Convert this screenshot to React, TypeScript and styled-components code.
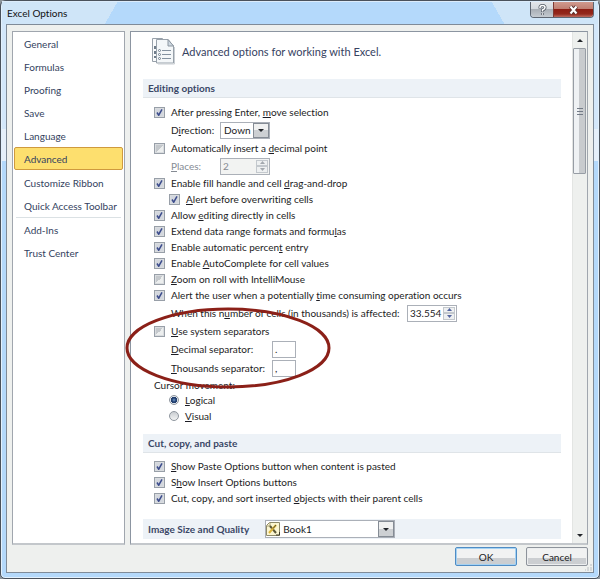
import React, { ReactNode } from 'react';
import styled, { createGlobalStyle, css } from 'styled-components';

const GlobalStyle = createGlobalStyle`
  * { box-sizing: border-box; }
  html, body { margin: 0; }
  body, button, input, select {
    font-family: Lato, "Open Sans", sans-serif;
    font-size: 10px;
    line-height: 14px;
    color: #1c1c24;
    font-variant-ligatures: none;
  }
  body { background: #8d959c; }
`;

const Window = styled.div`
  display: flex;
  flex-direction: column;
  min-height: 100vh;
  padding: 0 5px 5px;
  border: 1px solid #4a525c;
  border-radius: 6px 6px 5px 5px;
  background: linear-gradient(#d3e7fa 0 128px, #e6f0fa 128px 160px, #b4d9fb 160px);
  box-shadow: inset 0 0 0 1px #e3f1fd;
`;

const TitleBar = styled.header`
  display: flex;
  justify-content: space-between;
  align-items: flex-start;
  height: 23px;
  margin: 0 -4px;
  padding-left: 5px;
  border-top: 1px solid #dcecfb;
  background:
    linear-gradient(120deg, #cfe5f8 0 100px, transparent 100px),
    linear-gradient(240deg, #cfe5f8 0 92px, transparent 92px),
    #b4d9fb;
`;

const Title = styled.h1`
  margin: 4px 0 0;
  font-size: 10px;
  line-height: 14px;
  font-weight: 400;
  color: #111;
`;

const Caption = styled.div`
  display: flex;
  margin-right: 4px;
  border: 1px solid #5d6672;
  border-top: 0;
  border-radius: 0 0 4px 4px;
  overflow: hidden;
`;

const CaptionButton = styled.button<{ $close?: boolean }>`
  display: grid;
  place-items: center;
  width: ${p => (p.$close ? 40 : 22)}px;
  height: 15px;
  padding: 0;
  border: 0;
  border-left: ${p => (p.$close ? '1px solid #7d3a34' : '0')};
  background: ${p =>
    p.$close
      ? 'linear-gradient(#d09a8e, #c07f72 45%, #8c1c12 45%, #94281c 80%, #bd6c60)'
      : 'linear-gradient(#e3e6ea, #d3d8de 50%, #a9afb6 50%, #c4cad0)'};
`;

const Client = styled.div`
  display: flex;
  flex-direction: column;
  flex: 1;
  border: 1px solid #7f8b98;
  background: #eef0ee;
`;

const Panels = styled.div`
  display: flex;
  flex: 1;
  gap: 5px;
  padding: 6px 5px 0;
`;

const Nav = styled.nav`
  flex: 0 0 113px;
  min-width: 0;
  border: 1px solid #a0a6ae;
  border-bottom: 2px solid #c3c7cb;
  background: #fff;
`;

const NavLink = styled.a<{ $active?: boolean }>`
  display: block;
  height: 23px;
  padding: 4px 0 3px 9px;
  border: 1px solid transparent;
  margin: 0 1px;
  color: #343f60;
  text-decoration: none;
  white-space: nowrap;
  ${p =>
    p.$active &&
    css`
      margin-bottom: 1px;
      border-color: #cf9a3e;
      border-radius: 2px;
      background: #fddf6e;
    `}
`;

const NavRule = styled.hr`
  height: 1px;
  margin: 0 3px;
  border: 0;
  background: #dbe1e4;
`;

const Main = styled.main`
  display: flex;
  flex: 1;
  min-width: 0;
  border: 1px solid #8c95a1;
  border-right-color: #a0a6ae;
  border-bottom: 2px solid #c3c7cb;
  background: #fff;
`;

const Content = styled.div`
  flex: 1;
  min-width: 0;
  padding: 5px 11px 4px 12px;
`;

const Heading = styled.div`
  display: flex;
  align-items: flex-start;
  gap: 7px;
  height: 42px;
  padding-left: 8px;

  h2 {
    margin: 7px 0 0;
    font-size: 11px;
    line-height: 16px;
    font-weight: 400;
    color: #36425f;
    white-space: nowrap;
  }
`;

const SectionBar = styled.div<{ $tall?: boolean }>`
  display: flex;
  align-items: center;
  gap: 16px;
  height: ${p => (p.$tall ? 20 : 19)}px;
  margin-top: ${p => (p.$tall ? 3 : 0)}px;
  padding-left: 5px;
  border-bottom: ${p => (p.$tall ? '0' : '1px solid #dfe4e8')};
  background: #edf2f7;

  h3 {
    margin: 0;
    font-size: 10px;
    line-height: 14px;
    color: #3a4766;
  }

  label { color: inherit; }
`;

const Rows = styled.div`
  padding: 5px 0 10px 11px;
`;

const Row = styled.div<{ $h?: number; $indent?: number }>`
  display: flex;
  align-items: center;
  height: ${p => p.$h ?? 16}px;
  padding-left: ${p => p.$indent ?? 0}px;
  white-space: nowrap;
`;

const CheckLabel = styled.label`
  display: flex;
  align-items: center;
  gap: 6px;
`;

const Check = styled.input`
  appearance: none;
  width: 11px;
  height: 11px;
  margin: 0;
  border: 1px solid #989fa8;
  background: linear-gradient(135deg, #c4c8cc 0 50%, #eceeee 50%);
  box-shadow: inset 0 0 0 1px #d9dcdf;

  &:checked {
    background: #d3d7de
      url("data:image/svg+xml,%3Csvg xmlns='http://www.w3.org/2000/svg' viewBox='0 0 9 9'%3E%3Cpath d='M2 4.5 3.7 7.2 7 1.3' fill='none' stroke='%233c4c8c' stroke-width='1.5'/%3E%3C/svg%3E");
  }
`;

const Radio = styled.input`
  appearance: none;
  width: 10px;
  height: 10px;
  margin: 0;
  border: 1px solid #8f969e;
  border-radius: 50%;
  background: linear-gradient(#c9cdd1, #f2f3f3);

  &:checked {
    background: radial-gradient(circle at 50% 50%, #6f9bd0 0, #23406f 2px, #23406f 3px, #e3e7ec 3px);
  }
`;

const FieldLabel = styled.label<{ $w?: number; $muted?: boolean }>`
  width: ${p => (p.$w ? `${p.$w}px` : 'auto')};
  color: ${p => (p.$muted ? '#858b93' : 'inherit')};
`;

const SelectBox = styled.span<{ $w: number; $h: number }>`
  display: flex;
  align-items: center;
  width: ${p => p.$w}px;
  height: ${p => p.$h}px;
  border: 1px solid #abb0b8;
  background: #fff;
`;

const Select = styled.select`
  appearance: none;
  flex: 1;
  min-width: 0;
  height: 14px;
  padding: 0 0 0 3px;
  border: 0;
  background: transparent;
`;

const DropArrow = styled.span`
  display: grid;
  place-items: center;
  align-self: stretch;
  width: 16px;
  border: 1px solid #858c95;
  background: linear-gradient(#f0f1f1 50%, #cdd0d3 50%);
`;

const Spinner = styled.span<{ $disabled?: boolean }>`
  display: flex;
  width: 50px;
  height: 17px;
  padding: 1px;
  border: 1px solid #abb0b8;
  background: ${p => (p.$disabled ? '#f2f3f2' : '#fff')};

  input {
    flex: 1;
    min-width: 0;
    padding: 0 0 0 1px;
    border: 0;
    background: transparent;
    color: ${p => (p.$disabled ? '#858b93' : '#1c1c24')};
  }
`;

const SpinButtons = styled.span`
  display: grid;
  grid-template-rows: 1fr 1fr;
  width: 12px;

  button {
    display: grid;
    place-items: center;
    min-height: 0;
    padding: 0;
    border: 1px solid #c3c8cd;
    background: #eef0f1;
  }
`;

const CharInput = styled.input`
  width: 24px;
  height: 17px;
  padding: 0 2px;
  border: 1px solid #abb0b8;
  background: #fff;
`;

const Separators = styled.div`
  position: relative;
`;

const Ring = styled.svg`
  position: absolute;
  left: -29px;
  top: -16px;
  width: 206px;
  height: 82px;
  pointer-events: none;
`;

const ScrollBar = styled.div`
  display: flex;
  flex-direction: column;
  flex: 0 0 15px;
  border-left: 1px solid #e3e5e3;
  background: #eef0ee;
`;

const ScrollButton = styled.button`
  display: grid;
  place-items: center;
  height: 16px;
  padding: 0;
  border: 0;
  background: transparent;
`;

const Thumb = styled.div`
  display: grid;
  place-items: center;
  width: 13px;
  height: 126px;
  border: 1px solid #979da5;
  border-radius: 1px;
  background: linear-gradient(90deg, #eff2f4 45%, #c8cbce 45%);
`;

const Track = styled.div`
  flex: 1;
`;

const Footer = styled.footer`
  position: relative;
  display: flex;
  justify-content: flex-end;
  align-items: flex-start;
  gap: 9px;
  height: 27px;
  padding: 2px 5px 0 0;
`;

const PushButton = styled.button<{ $primary?: boolean }>`
  width: 62px;
  height: 19px;
  padding: 0;
  border: 1px solid ${p => (p.$primary ? '#4f8cc4' : '#8d939b')};
  border-radius: 2px;
  background: linear-gradient(#f1f2f2 60%, #cbced1 60%);
  box-shadow: inset 0 0 0 1px ${p => (p.$primary ? '#a5d2f2' : '#eceeef')};
`;

const Grip = styled.svg`
  position: absolute;
  right: 1px;
  bottom: 1px;
  width: 7px;
  height: 7px;
`;

const Arrow = ({ up, w = 6, color = '#22252a' }: { up?: boolean; w?: number; color?: string }) => (
  <svg width={w} height="3" viewBox="0 0 6 3" preserveAspectRatio="none" aria-hidden="true">
    <path d={up ? 'M0 3h6L3 0z' : 'M0 0h6L3 3z'} fill={color} />
  </svg>
);

const PagesIcon = () => (
  <svg width="24" height="28" viewBox="0 0 24 28" aria-hidden="true">
    <path d="M1.500 1.500h10l4 4v19h-14z" fill="#fafbfc" stroke="#98a1aa" />
    <path d="M4 9v3M4 14v3M4 19v2" stroke="#6f7c8a" strokeWidth="2" />
    <path d="M5.500 2.500H17l5.500 6.500v17H5.500z" fill="#f4f7f9" stroke="#98a1aa" />
    <path d="M17 2.500V9h5.500z" fill="#cfd9e2" stroke="#8d97a1" />
    <path d="M11 13.500h9M11 17.500h9M11 21.500h9" stroke="#8492a0" />
    <g fill="#fff" stroke="#6f7e8d">
      <circle cx="8.500" cy="13.500" r="1" />
      <circle cx="8.500" cy="17.500" r="1" />
      <circle cx="8.500" cy="21.500" r="1" />
    </g>
    <path d="M7 27h16.500V10" fill="none" stroke="#c9ced3" />
  </svg>
);

const BookIcon = () => (
  <svg width="14" height="14" viewBox="0 0 14 14" aria-hidden="true">
    <path d="M3.500.5h10v13H.5v-10z" fill="#fbf6d2" stroke="#8d8969" />
    <path d="M1 4h3V1" fill="none" stroke="#a39d72" />
    <path d="M4 4l6 7" stroke="#5b5738" strokeWidth="2" />
    <path d="M10 3l-7 8" stroke="#dcb43a" strokeWidth="2" />
    <path d="M10 3l-3 3.500" stroke="#5b5738" strokeWidth="1" />
    <path d="M10 13h3.500v-3" fill="none" stroke="#3d3a28" />
  </svg>
);

interface CheckRowProps {
  children: ReactNode;
  checked?: boolean;
  h?: number;
  indent?: number;
}

const CheckRow = ({ children, checked, h, indent }: CheckRowProps) => (
  <Row $h={h} $indent={indent}>
    <CheckLabel>
      <Check type="checkbox" defaultChecked={checked} />
      <span>{children}</span>
    </CheckLabel>
  </Row>
);

const SpinBox = ({ id, value, disabled }: { id: string; value: string; disabled?: boolean }) => (
  <Spinner $disabled={disabled}>
    <input id={id} defaultValue={value} disabled={disabled} />
    <SpinButtons>
      <button type="button" aria-label="Increase" disabled={disabled}>
        <Arrow up w={5} color={disabled ? '#a3a8ae' : '#5566a0'} />
      </button>
      <button type="button" aria-label="Decrease" disabled={disabled}>
        <Arrow w={5} color={disabled ? '#a3a8ae' : '#5566a0'} />
      </button>
    </SpinButtons>
  </Spinner>
);

const navTop = ['General', 'Formulas', 'Proofing', 'Save', 'Language', 'Advanced', 'Customize Ribbon', 'Quick Access Toolbar'];
const navBottom = ['Add-Ins', 'Trust Center'];

export default function App() {
  return (
    <>
      <GlobalStyle />
      <Window>
        <TitleBar>
          <Title>Excel Options</Title>
          <Caption>
            <CaptionButton type="button" aria-label="Help">
              <svg width="9" height="12" viewBox="0 0 9 12" fill="none" aria-hidden="true">
                <path d="M2 4.500V3.500Q2 1.500 4.500 1.500T7 3.500Q7 5 4.500 6v2M4.500 9v2" stroke="#535b66" strokeWidth="3" />
                <path d="M2 4V3.500Q2 1.500 4.500 1.500T7 3.500Q7 5 4.500 6v1.500M4.500 9.200v1.500" stroke="#fff" strokeWidth="1.500" />
              </svg>
            </CaptionButton>
            <CaptionButton type="button" $close aria-label="Close">
              <svg width="11" height="10" viewBox="0 0 11 10" aria-hidden="true">
                <path d="M2.500 1.500l6 7M8.500 1.500l-6 7" stroke="#5a3532" strokeWidth="4" />
                <path d="M2.500 1.500l6 7M8.500 1.500l-6 7" stroke="#fff" strokeWidth="2" />
              </svg>
            </CaptionButton>
          </Caption>
        </TitleBar>

        <Client>
          <Panels>
            <Nav>
              {navTop.map(name => (
                <NavLink key={name} href="#" $active={name === 'Advanced'}>{name}</NavLink>
              ))}
              <NavRule />
              {navBottom.map(name => (
                <NavLink key={name} href="#">{name}</NavLink>
              ))}
            </Nav>

            <Main>
              <Content>
                <Heading>
                  <PagesIcon />
                  <h2>Advanced options for working with Excel.</h2>
                </Heading>

                <SectionBar><h3>Editing options</h3></SectionBar>
                <Rows>
                  <CheckRow checked h={18}>After pressing Enter, <u>m</u>ove selection</CheckRow>
                  <Row $h={18} $indent={17}>
                    <FieldLabel htmlFor="direction" $w={49}>D<u>i</u>rection:</FieldLabel>
                    <SelectBox $w={50} $h={17}>
                      <Select id="direction" defaultValue="Down">
                        <option>Down</option>
                        <option>Right</option>
                        <option>Up</option>
                        <option>Left</option>
                      </Select>
                      <DropArrow><Arrow /></DropArrow>
                    </SelectBox>
                  </Row>
                  <CheckRow h={18}>Automatically insert a <u>d</u>ecimal point</CheckRow>
                  <Row $h={18} $indent={17}>
                    <FieldLabel htmlFor="places" $w={49} $muted><u>P</u>laces:</FieldLabel>
                    <SpinBox id="places" value="2" disabled />
                  </Row>
                  <CheckRow checked>Enable fill handle and cell <u>d</u>rag-and-drop</CheckRow>
                  <CheckRow checked indent={15}><u>A</u>lert before overwriting cells</CheckRow>
                  <CheckRow checked>Allow <u>e</u>diting directly in cells</CheckRow>
                  <CheckRow checked>Extend data range formats and formu<u>l</u>as</CheckRow>
                  <CheckRow checked>Enable automatic percen<u>t</u> entry</CheckRow>
                  <CheckRow checked>Enable <u>A</u>utoComplete for cell values</CheckRow>
                  <CheckRow><u>Z</u>oom on roll with IntelliMouse</CheckRow>
                  <CheckRow checked>Alert the user when a potentially <u>t</u>ime consuming operation occurs</CheckRow>
                  <Row $h={20} $indent={17}>
                    <FieldLabel htmlFor="cells" $w={236}>When this n<u>u</u>mber of cells (in thousands) is affected:</FieldLabel>
                    <SpinBox id="cells" value="33.554" />
                  </Row>
                  <Separators>
                    <CheckRow><u>U</u>se system separators</CheckRow>
                    <Row $h={20} $indent={17}>
                      <FieldLabel htmlFor="decimal" $w={101}><u>D</u>ecimal separator:</FieldLabel>
                      <CharInput id="decimal" defaultValue="." />
                    </Row>
                    <Row $h={18} $indent={17}>
                      <FieldLabel htmlFor="thousands" $w={101}><u>T</u>housands separator:</FieldLabel>
                      <CharInput id="thousands" defaultValue="," />
                    </Row>
                    <Ring viewBox="0 0 206 82" aria-hidden="true">
                      <ellipse cx="103" cy="41" rx="101" ry="39" fill="none" stroke="#8b2018" strokeWidth="3" />
                    </Ring>
                  </Separators>
                  <Row $h={15}>Cursor movement:</Row>
                  <Row $indent={15}>
                    <CheckLabel><Radio type="radio" name="cursor" defaultChecked /><span><u>L</u>ogical</span></CheckLabel>
                  </Row>
                  <Row $indent={15}>
                    <CheckLabel><Radio type="radio" name="cursor" /><span><u>V</u>isual</span></CheckLabel>
                  </Row>
                </Rows>

                <SectionBar><h3>Cut, copy, and paste</h3></SectionBar>
                <Rows>
                  <CheckRow checked><u>S</u>how Paste Options button when content is pasted</CheckRow>
                  <CheckRow checked>S<u>h</u>ow Insert Options buttons</CheckRow>
                  <CheckRow checked>Cut, copy, and sort inserted <u>o</u>bjects with their parent cells</CheckRow>
                </Rows>

                <SectionBar $tall>
                  <h3><label htmlFor="book">Image Size and Quality</label></h3>
                  <SelectBox $w={130} $h={18}>
                    <BookIcon />
                    <Select id="book" defaultValue="Book1">
                      <option>Book1</option>
                      <option>All New Workbooks</option>
                    </Select>
                    <DropArrow><Arrow /></DropArrow>
                  </SelectBox>
                </SectionBar>
              </Content>

              <ScrollBar>
                <ScrollButton type="button" aria-label="Scroll up"><Arrow up /></ScrollButton>
                <Thumb>
                  <svg width="6" height="7" viewBox="0 0 6 7" aria-hidden="true">
                    <path d="M0 .5h6M0 3.500h6M0 6.500h6" stroke="#727a86" />
                  </svg>
                </Thumb>
                <Track />
                <ScrollButton type="button" aria-label="Scroll down"><Arrow /></ScrollButton>
              </ScrollBar>
            </Main>
          </Panels>

          <Footer>
            <PushButton type="button" $primary>OK</PushButton>
            <PushButton type="button">Cancel</PushButton>
            <Grip viewBox="0 0 7 7" aria-hidden="true">
              <path d="M5 1h2M2 4h2M5 4h2M0 6h1M2 6h2M5 6h2" stroke="#b9bec2" />
            </Grip>
          </Footer>
        </Client>
      </Window>
    </>
  );
}
